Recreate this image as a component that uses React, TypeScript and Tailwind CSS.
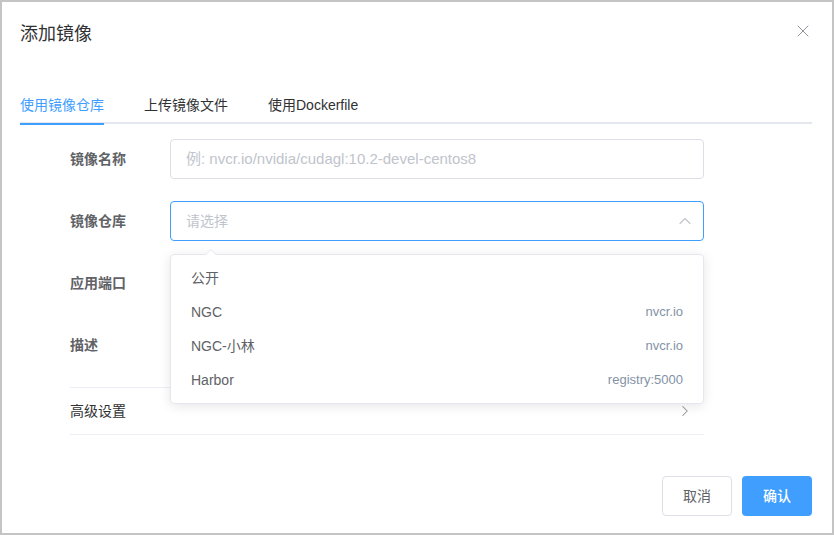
import { X, ChevronUp, ChevronRight } from "lucide-react";

const registries = [
  { name: "公开", host: "" },
  { name: "NGC", host: "nvcr.io" },
  { name: "NGC-小林", host: "nvcr.io" },
  { name: "Harbor", host: "registry:5000" },
];

const tabs = ["使用镜像仓库", "上传镜像文件", "使用Dockerfile"];

function FormRow({ label, children }: { label: string; children?: React.ReactNode }) {
  return (
    <div className="flex items-center h-10 mb-[22px]">
      <label className="w-[100px] shrink-0 text-sm font-bold text-[#606266]">{label}</label>
      <div className="flex-1 relative">{children}</div>
    </div>
  );
}

export default function App() {
  return (
    <div
      className="w-[834px] h-[535px] bg-white border-2 border-[#c4c4c4] flex flex-col overflow-hidden"
      style={{ fontFamily: '"Liberation Sans", "Noto Sans CJK SC", sans-serif' }}
    >
      {/* Header */}
      <div className="flex items-start justify-between pt-[18px] pl-[18px] pr-[19px] pb-[10px]">
        <h1 className="text-[18px] leading-6 text-[#303133] pt-[2px] h-6">添加镜像</h1>
        <X className="w-5 h-5 text-[#909399] mt-[1px]" strokeWidth={1.2} />
      </div>

      {/* Body */}
      <div className="pt-[30px] px-[18px] pr-[20px] flex-1">
        <div className="flex h-10 items-center border-b-2 border-[#e4e7ed] relative">
          {tabs.map((t, i) => (
            <div
              key={t}
              className={`h-10 flex items-center pt-[3px] text-sm relative ${i === 0 ? "pr-5 text-[#409eff]" : "px-5 text-[#303133]"}`}
            >
              {t}
              {i === 0 && <div className="absolute left-0 right-5 -bottom-[2px] h-[2px] bg-[#409eff]" />}
            </div>
          ))}
        </div>

        <div className="mt-[15px] ml-[50px] w-[634px]">
          <FormRow label="镜像名称">
            <div className="h-10 border border-[#dcdfe6] rounded flex items-center px-[15px] text-[15px] text-[#c0c4cc]">
              例: nvcr.io/nvidia/cudagl:10.2-devel-centos8
            </div>
          </FormRow>
          <FormRow label="镜像仓库">
            <div className="h-10 border border-[#409eff] rounded flex items-center justify-between pl-[15px] pr-[8px] text-sm text-[#c0c4cc]">
              <span>请选择</span>
              <ChevronUp className="w-5 h-5 text-[#c0c4cc]" strokeWidth={1.3} />
            </div>
            {/* dropdown */}
            <div className="absolute left-0 right-0 top-[53px] z-10 bg-white border border-[#e4e7ed] rounded shadow-[0_2px_12px_0_rgba(0,0,0,0.1)] py-[6px]">
              <div className="absolute -top-[6px] left-[34px] w-0 h-0 border-l-[6px] border-r-[6px] border-b-[6px] border-l-transparent border-r-transparent border-b-[#e4e7ed]" />
              <div className="absolute -top-[5px] left-[35px] w-0 h-0 border-l-[5px] border-r-[5px] border-b-[5px] border-l-transparent border-r-transparent border-b-white" />
              {registries.map((r) => (
                <div key={r.name} className="h-[34px] flex items-center justify-between px-5 text-sm text-[#606266]">
                  <span>{r.name}</span>
                  <span className="text-[13px] text-[#8492a6]">{r.host}</span>
                </div>
              ))}
            </div>
          </FormRow>
          <FormRow label="应用端口">
            <div className="h-10 border border-[#dcdfe6] rounded" />
          </FormRow>
          <FormRow label="描述">
            <div className="h-10 border border-[#dcdfe6] rounded" />
          </FormRow>
          <div className="h-[48px] border-t border-b border-[#ebeef5] flex items-center justify-between pr-[10px]">
            <span className="text-sm text-[#303133]">高级设置</span>
            <ChevronRight className="w-[18px] h-[18px] text-[#909399]" strokeWidth={1.4} />
          </div>
        </div>
      </div>

      {/* Footer */}
      <div className="flex justify-end gap-[10px] px-5 pb-[17px]">
        <button className="w-[70px] h-10 border border-[#dcdfe6] rounded text-sm text-[#606266] bg-white">取消</button>
        <button className="w-[70px] h-10 rounded text-sm font-medium text-white bg-[#409eff]">确认</button>
      </div>
    </div>
  );
}
